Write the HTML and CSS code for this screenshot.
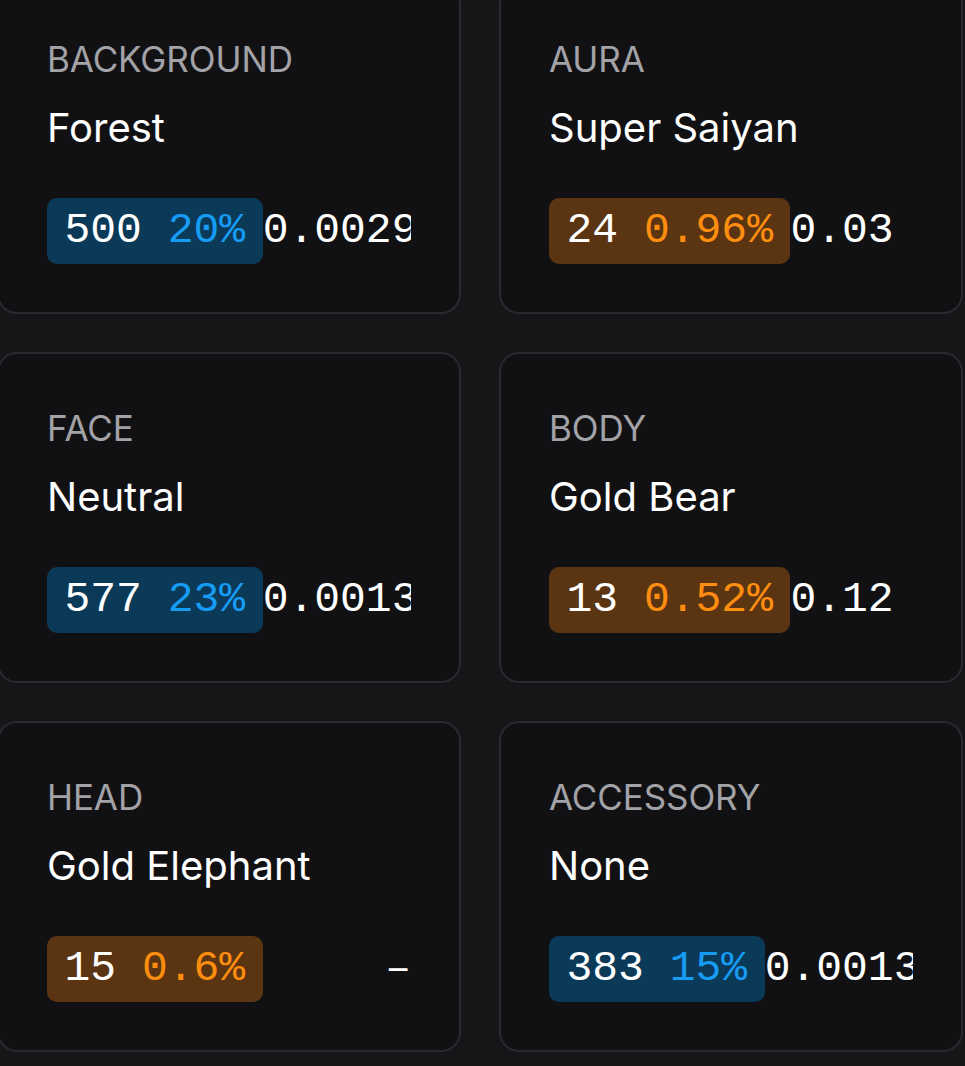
FILE: index.html
```html
<!DOCTYPE html>
<html lang="en">
<head>
<meta charset="utf-8">
<title>Traits</title>
<link rel="stylesheet" href="styles.css">
</head>
<body>
<div class="traits">
  <div class="card">
    <div class="label">BACKGROUND</div>
    <div class="value">Forest</div>
    <div class="stats">
      <span class="badge blue"><span class="count">500</span> <span class="pct">20%</span></span>
      <span class="price">0.0029</span>
    </div>
  </div>
  <div class="card">
    <div class="label">AURA</div>
    <div class="value">Super Saiyan</div>
    <div class="stats">
      <span class="badge orange"><span class="count">24</span> <span class="pct">0.96%</span></span>
      <span class="price">0.03</span>
    </div>
  </div>
  <div class="card">
    <div class="label">FACE</div>
    <div class="value">Neutral</div>
    <div class="stats">
      <span class="badge blue"><span class="count">577</span> <span class="pct">23%</span></span>
      <span class="price">0.0013</span>
    </div>
  </div>
  <div class="card">
    <div class="label">BODY</div>
    <div class="value">Gold Bear</div>
    <div class="stats">
      <span class="badge orange"><span class="count">13</span> <span class="pct">0.52%</span></span>
      <span class="price">0.12</span>
    </div>
  </div>
  <div class="card">
    <div class="label">HEAD</div>
    <div class="value">Gold Elephant</div>
    <div class="stats">
      <span class="badge orange"><span class="count">15</span> <span class="pct">0.6%</span></span>
      <span class="price empty">–</span>
    </div>
  </div>
  <div class="card">
    <div class="label">ACCESSORY</div>
    <div class="value">None</div>
    <div class="stats">
      <span class="badge blue"><span class="count">383</span> <span class="pct">15%</span></span>
      <span class="price">0.0013</span>
    </div>
  </div>
</div>
</body>
</html>
```

FILE: styles.css
```css
html, body {
  margin: 0;
  padding: 0;
  background: #161618;
}

body {
  overflow: hidden;
  font-family: Inter, "Noto Sans", sans-serif;
  color: #ffffff;
}

.traits {
  display: grid;
  grid-template-columns: 1fr 1fr;
  column-gap: 38px;
  row-gap: 38px;
  width: 966px;
  margin: -17px 0 0 -3px;
}

.card {
  box-sizing: border-box;
  height: 331px;
  background: #111113;
  border: 2px solid #2a2a2e;
  border-radius: 20px;
  padding: 52px 48px 48px 48px;
  display: flex;
  flex-direction: column;
  min-width: 0;
}

.label {
  font-size: 35px;
  line-height: 44px;
  color: #a2a2a7;
  white-space: nowrap;
  letter-spacing: -0.1px;
}

.value {
  margin-top: 23px;
  font-size: 40px;
  line-height: 48px;
  color: #ffffff;
  white-space: nowrap;
}

.stats {
  margin-top: 46px;
  display: flex;
  align-items: center;
  height: 66px;
  overflow: hidden;
  font-family: "Liberation Mono", "DejaVu Sans Mono", monospace;
  font-size: 43px;
  font-variant-numeric: slashed-zero;
  white-space: pre;
}

.badge {
  flex: none;
  display: block;
  height: 66px;
  line-height: 66px;
  padding: 0 17.5px;
  border-radius: 10px;
  box-sizing: border-box;
  white-space: pre;
}

.badge .count {
  color: #ffffff;
}

.badge.blue {
  background: #0b3a59;
}

.badge.blue .pct {
  color: #179cf4;
}

.badge.orange {
  background: #5b3511;
}

.badge.orange .pct {
  color: #ff8e10;
}

.price {
  color: #ffffff;
  overflow: hidden;
  line-height: 66px;
}

.price.empty {
  margin-left: auto;
}
```
